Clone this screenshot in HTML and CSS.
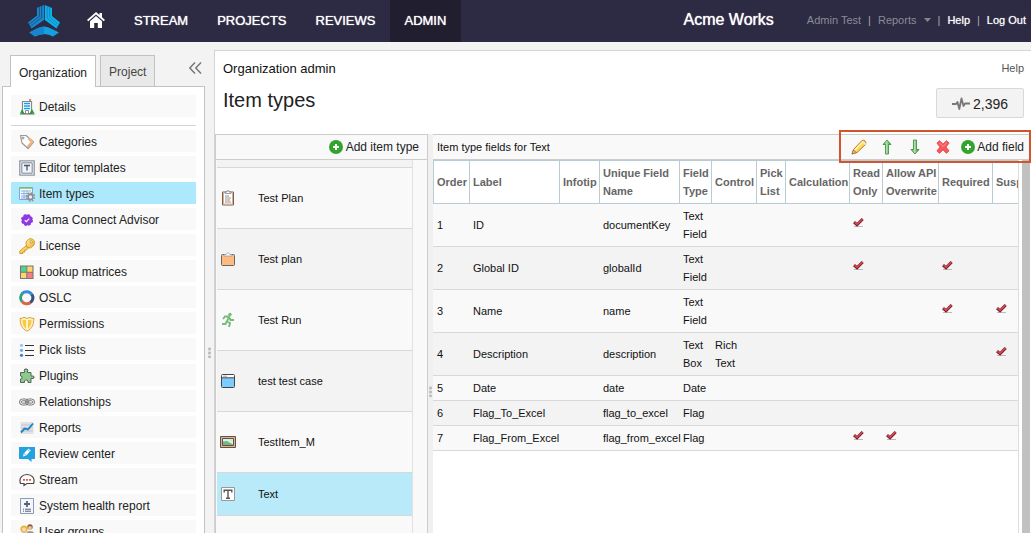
FILE: index.html
```html
<!DOCTYPE html>
<html lang="en">
<head>
<meta charset="utf-8">
<title>Item types</title>
<link rel="stylesheet" href="styles.css">
</head>
<body>
<svg class="defs" aria-hidden="true">
  <defs>
    <linearGradient id="gold" x1="0" y1="0" x2="1" y2="1"><stop offset="0" stop-color="#fff3a8"/><stop offset="1" stop-color="#efae28"/></linearGradient>
    <linearGradient id="green" x1="0" y1="0" x2="1" y2="0"><stop offset="0" stop-color="#3f9a45"/><stop offset=".45" stop-color="#b4e5a6"/><stop offset="1" stop-color="#2e8136"/></linearGradient>
    <symbol id="tick" viewBox="0 0 11 16">
      <path d="M1 9.500h9" stroke="#bbb" stroke-width="1"/>
      <path d="M1 5.200 4 7.700 9.700 2" fill="none" stroke="#7c1f2b" stroke-width="3"/>
      <path d="M1.500 5.200 4 7.200 9.500 1.900" fill="none" stroke="#dd4a4f" stroke-width="1.400"/>
    </symbol>
    <symbol id="plus" viewBox="0 0 14 14">
      <circle cx="7" cy="7" r="7" fill="#32a32c"/><path d="M7 4v6M4 7h6" stroke="#fff" stroke-width="2"/>
    </symbol>
  </defs>
</svg>

<div class="app">
  <header class="topbar">
    <a class="logo" href="#" aria-label="Jama home">
      <svg viewBox="0 0 32 32" width="32" height="32">
        <path d="M9 2.700 16 0v15L3.500 23.500 0 17.500l9-7z" fill="#1788cf"/>
        <path d="M11.400 1.500v10L1 19.300M13.700.500v12L2.200 21.500" fill="none" stroke="#2c2b43" stroke-width=".6"/>
        <path d="M16.800 0 24 3v8l8 6.500-3.500 6L16.800 15z" fill="#0cb1e8"/>
        <path d="M19.200.800V13l10.300 8.700M21.600 1.800v10.200l9.200 7.700" fill="none" stroke="#1579b7" stroke-width=".7"/>
        <path d="M1.300 27.500 8 24q8-5 16 0l7 3.500-6 4q-9-5-18 0z" fill="#139fe0"/>
        <path d="M1.300 27.500 8 24q4-2.500 8-2.500v7.700q-4.500 0-9 2.300z" fill="#1685cd"/>
      </svg>
    </a>
    <nav class="mainnav">
      <a class="home" href="#" aria-label="Home">
        <svg viewBox="0 0 18 16" width="18" height="16"><path d="M9 0 0 8l1.300 1.300L9 2.600l7.700 6.700L18 8l-3-2.700V1h-2.500v2z" fill="#fff"/><path d="M3 9.200 9 4l6 5.200V16h-4.200v-5H7.200v5H3z" fill="#fff"/></svg>
      </a>
      <a href="#">STREAM</a>
      <a href="#">PROJECTS</a>
      <a href="#">REVIEWS</a>
      <a href="#" class="current">ADMIN</a>
    </nav>
    <span class="org">Acme Works</span>
    <nav class="userlinks">
      <a href="#" class="dim">Admin Test</a><i>|</i>
      <a href="#" class="dim">Reports <svg viewBox="0 0 7 4" width="7" height="4"><path d="M0 0h7L3.500 4z" fill="#85848f"/></svg></a><i>|</i>
      <a href="#">Help</a><i>|</i>
      <a href="#">Log Out</a>
    </nav>
  </header>

  <div class="body">
    <aside class="sidebar">
      <div class="tabs">
        <button class="tab active" type="button">Organization</button>
        <button class="tab" type="button">Project</button>
        <button class="collapse" type="button" aria-label="Collapse sidebar">
          <svg viewBox="0 0 13 12" width="13" height="12"><path d="M6 .5.800 6 6 11.500M12 .5 6.800 6l5.200 5.500" fill="none" stroke="#777" stroke-width="1.500"/></svg>
        </button>
      </div>
      <nav class="menu">
        <a href="#"><svg viewBox="0 0 16 16"><path d="M11 0v2" stroke="#d22" stroke-width="1.200"/><path d="M3.500 2.500h9v12h-9z" fill="#fff" stroke="#888" stroke-width="1.200"/><path d="M5 4.500h6M5 7h6M5 9.500h6" stroke="#16a0ee" stroke-width="1.400"/><path d="M6.500 14.500v-3h3v3" fill="#fff" stroke="#888"/><path d="M1 14.500 3 10l2.500 4.500zM10.500 14.500 13 10l2.500 4.500z" fill="#1fa32f"/><path d="M1 15h14.500" stroke="#666" stroke-width="1"/></svg>Details</a>
        <hr>
        <a href="#"><svg viewBox="0 0 16 16"><path d="M1.500 1.500h5.500l7.500 6.500-5.500 6.500-6-5.500z" fill="#fff" stroke="#999" stroke-width="1.200" stroke-linejoin="round"/><path d="M9.500 4.500 13 8l-4.500 5" fill="none" stroke="#f6b27a" stroke-width="2.400"/><circle cx="4" cy="4" r="1" fill="#fff" stroke="#777" stroke-width=".8"/></svg>Categories</a>
        <a href="#"><svg viewBox="0 0 16 16"><path d="M.8.800h14.400v14.400H.8z" fill="#fff" stroke="#8f95a3" stroke-width="1.300"/><path d="M2.800 2.800h10.400v10.400H2.800z" fill="#eef4fb" stroke="#7d8697"/><path d="M5 5.500h6M8 5.500v5" stroke="#555" stroke-width="1.300"/></svg>Editor templates</a>
        <a href="#" class="current"><svg viewBox="0 0 16 16"><path d="M.5 1.500h13v12H.5z" fill="#f3f8ff" stroke="#7fa7dc"/><path d="M.5 2h13" stroke="#83bd58" stroke-width="1.500"/><path d="M2 5h10M2 7.500h10M2 10h7M2 12h6M5 4.500v8M8 4.500v8" stroke="#8bb2e5"/><circle cx="11.500" cy="11" r="4" fill="none" stroke="#979797" stroke-width="1.800" stroke-dasharray="1.700 1.400"/><circle cx="11.500" cy="11" r="2.400" fill="#eee" stroke="#8c8c8c" stroke-width="1.500"/></svg>Item types</a>
        <a href="#"><svg viewBox="0 0 16 16"><circle cx="8" cy="8" r="5.200" fill="#9138e3"/><circle cx="8" cy="8" r="5" fill="none" stroke="#9138e3" stroke-width="2" stroke-dasharray="2.600 1.320"/><path d="M5.800 8.200 7.400 9.700 10.300 6.600" fill="none" stroke="#fff" stroke-width="1.200"/></svg>Jama Connect Advisor</a>
        <a href="#"><svg viewBox="0 0 16 16"><path d="M8 7 .8 13v2.500h3V14h2v-2h1.700l2.500-2.500" fill="url(#gold)" stroke="#d39a2d"/><path d="M7 4 10 .8l3.500.2 2 2.500-.5 3.500-3.500 3-4-1z" fill="url(#gold)" stroke="#d39a2d"/><circle cx="12.200" cy="3.800" r="1.200" fill="#fff" stroke="#b57b16" stroke-width=".7"/></svg>License</a>
        <a href="#"><svg viewBox="0 0 16 16"><path d="M1.500 2h6v6h-6z" fill="#4bd391"/><path d="M8 2h6v6H8zM1.500 8h6v6h-6z" fill="#ffd56a"/><path d="M8 8h6v6H8z" fill="#fb7c80"/><path d="M1.500 2h12.500v12.500H1.500zM7.800 2v12.500M1.500 8.200H14" fill="none" stroke="#777" stroke-width="1.100"/></svg>Lookup matrices</a>
        <a href="#"><svg viewBox="0 0 16 16" fill="none" stroke-width="3"><path d="M3.200 3.600A6 6 0 0 1 13 5" stroke="#3989dc"/><path d="M13 4.500A6 6 0 0 1 11 12.800" stroke="#34507e"/><path d="M11.500 12.500A6 6 0 0 1 3 11.500" stroke="#d9654d"/><path d="M3 11.500A6 6 0 0 1 3.500 3.400" stroke="#2ca27c"/></svg>OSLC</a>
        <a href="#"><svg viewBox="0 0 16 16"><path d="M1.200 2 3 2.500 5 1.200 8 2.500l3-1.300 2 1.300 1.800-.5C15 8 13.500 12.500 8 15.200 2.500 12.500 1 8 1.200 2z" fill="#fff0b3" stroke="#dca536"/><path d="M3.500 4h3.800v9C4.500 11 3.500 8 3.500 4zM8.800 4h3.700c0 4-1 7-3.700 9z" fill="#f7ca48"/><path d="M8 3v11" stroke="#fff" stroke-width="1"/></svg>Permissions</a>
        <a href="#"><svg viewBox="0 0 16 16"><path d="M6 3.500h9M6 8.500h9M6 13.500h9" stroke="#333" stroke-width="1.200"/><circle cx="2.500" cy="3.300" r="1.600" fill="#9dc2f0"/><circle cx="2.500" cy="8.300" r="1.600" fill="#75a7e4"/><circle cx="2.500" cy="13.300" r="1.600" fill="#3d7fd4"/></svg>Pick lists</a>
        <a href="#"><svg viewBox="0 0 16 16"><path d="M1.500 4.500h4V3L5 2l1-1h2l1 1-.5 1v1.500h3.500V8h2l1 .500v1.500l-1 .5h-2v4H9v-1.500l-1-1H6.500l-1 1v1.500h-4V11l1.500-.5V8.500L1.500 8z" fill="#8bc98d" stroke="#59655a"/></svg>Plugins</a>
        <a href="#"><svg viewBox="0 0 16 16" fill="none" stroke="#777"><rect x=".5" y="5" width="9" height="6" rx="3"/><rect x="6.500" y="5" width="9" height="6" rx="3"/><rect x="2.300" y="6.800" width="5.500" height="2.300" rx="1"/><rect x="8.200" y="6.800" width="5.500" height="2.300" rx="1"/></svg>Relationships</a>
        <a href="#"><svg viewBox="0 0 16 16"><path d="M1.500 2h13v12h-13z" fill="#e2e2e2"/><path d="M2 5h12M2 8h12M2 11h12" stroke="#c5c5c5"/><path d="M2 12.500 5.500 8.500 9 9.500 14 3.500" fill="none" stroke="#1c82cb" stroke-width="1.900"/></svg>Reports</a>
        <a href="#"><svg viewBox="0 0 16 16"><path d="M0 1h16v12h-3.500v3L9 13H0z" fill="#23a2df"/><path d="m4 10.500.8-3 4.500-5 2.500 2-4.500 5z" fill="#fff"/><path d="m5 7.500 2.300 2M8.500 3.500l2.500 2" stroke="#23a2df" stroke-width=".7"/></svg>Review center</a>
        <a href="#"><svg viewBox="0 0 16 16"><path d="M5 11.500H1.500C-.5 6 3.500 2.500 8 2.500s8.500 3.500 6.500 9H8l-3 2z" fill="#fff" stroke="#484848" stroke-width="1.200"/><path d="M4 7.800h2M7 7.800h2M10 7.800h2" stroke="#e9583e" stroke-width="1.800"/></svg>Stream</a>
        <a href="#"><svg viewBox="0 0 16 16"><path d="M1.500.500h13v15h-13z" fill="#f3f6fa" stroke="#8c9bb7"/><path d="M8 3v6M5 6h6" stroke="#56617a" stroke-width="1.800"/><path d="M4 11.200h1M6 11.200h6M4 13.200h1M6 13.200h6" stroke="#56617a"/></svg>System health report</a>
        <a href="#"><svg viewBox="0 0 16 16"><circle cx="11" cy="3" r="2.700" fill="#8a5a33"/><circle cx="11" cy="4" r="1.900" fill="#f3c69a"/><path d="M7.500 15V9q0-2 3.500-2t4 2v6z" fill="#9d9c91"/><circle cx="5" cy="5" r="3.600" fill="#e9b33d"/><circle cx="5" cy="5.500" r="2" fill="#fbd9b1"/><path d="M.5 16v-5q0-2.500 4.500-2.500T10 11v5z" fill="#b886c7"/></svg>User groups</a>
      </nav>
    </aside>

    <div class="splitter"><span class="grip"></span></div>

    <main class="main">
      <div class="heading">
        <div class="crumbs"><span>Organization admin</span><a href="#">Help</a></div>
        <div class="titlerow">
          <h1>Item types</h1>
          <button class="activity" type="button"><svg viewBox="0 0 18 14" width="18" height="14"><path d="M0 7h4l1.500-2 1.800 7L9.500 1.500l2 7.500L13 6.500h5" fill="none" stroke="#777" stroke-width="1.800" stroke-linejoin="round"/></svg>2,396</button>
        </div>
      </div>

      <div class="panes">
        <section class="types">
          <div class="bar"><button class="add" type="button"><svg width="14" height="14"><use href="#plus"/></svg>Add item type</button></div>
          <ul class="typelist">
            <li class="partial"></li>
            <li><svg viewBox="0 0 16 16"><path d="M2.500 2h11v13h-11z" fill="#fff" stroke="#666"/><path d="M3.500 3v11h9V3" fill="none" stroke="#f3a775"/><path d="M5 3.500V2h2V.8h2V2h2v1.500z" fill="#fff" stroke="#888" stroke-width=".8"/><path d="M5 6h4M5 8h6M5 10h5M5 12h6" stroke="#888" stroke-width=".9"/></svg>Test Plan</li>
            <li><svg viewBox="0 0 16 16"><rect x="1.500" y="3.500" width="13" height="11" rx="1" fill="#ffba82" stroke="#666"/><path d="M4 5V3.500h2l2-2 2 2h2V5z" fill="#fff" stroke="#999" stroke-width=".8"/></svg>Test plan</li>
            <li><svg viewBox="0 0 16 16" fill="none" stroke="#78bb78" stroke-width="1.900"><circle cx="10" cy="2.500" r="1.300" fill="#78bb78" stroke-width="1"/><path d="M3 7l2-2.500h4L7 9.500l3 1.500-1 4M7 9l-1.500 3H2M9 5l1.500 3H14"/></svg>Test Run</li>
            <li><svg viewBox="0 0 16 16"><rect x="1.500" y="1.500" width="13" height="13" rx="1" fill="#fff" stroke="#444"/><path d="M2 5h12v9H2z" fill="#7dccff"/><path d="M2 4.800h12" stroke="#444"/><path d="M3.500 3.200h1M5.500 3.200h1" stroke="#444"/></svg>test test case</li>
            <li><svg viewBox="0 0 16 16"><path d="M.500 2.500h15v11H.500z" fill="#f2ac7d" stroke="#555"/><path d="M2.500 4.500h11v7h-11z" fill="#d4f1fb" stroke="#555"/><path d="M3 7.500 7 7l6 3.500v.500H3z" fill="#78b870"/><circle cx="11.500" cy="6" r="1.200" fill="#ffe168"/></svg>TestItem_M</li>
            <li class="selected"><svg viewBox="0 0 16 16"><path d="M1.500 1.500h13v13h-13z" fill="#fff" stroke="#999"/><path d="M4.200 6.500V4.300h7.600v2.200M8 4.500V12M6 12.200h4" fill="none" stroke="#555" stroke-width="1.400"/></svg>Text</li>
          </ul>
        </section>

        <div class="splitter inner"><span class="grip"></span></div>

        <section class="fields">
          <div class="bar">
            <h2>Item type fields for Text</h2>
            <div class="tools">
              <button type="button" aria-label="Edit"><svg viewBox="0 0 16 16"><path d="M1 15 2.500 10.500 10.500 2q2-1.500 3.500 0t.500 3.500L6 13.500z" fill="#ffd65c" stroke="#b87c22"/><path d="m4 11 8-8.500" stroke="#fff2b0" stroke-width="1.600"/><path d="m11.500 2.500 3 3" stroke="#fbe7c5" stroke-width="1.800"/><path d="m1 15 1.500-4 3 2.500z" fill="#e8c193" stroke="#8b5a22" stroke-width=".6"/></svg></button>
              <button type="button" aria-label="Move up"><svg viewBox="0 0 16 16"><path d="M8 1l4 4.500h-2.500V15h-3V5.500H4z" fill="url(#green)" stroke="#338a3b" stroke-width=".8"/></svg></button>
              <button type="button" aria-label="Move down"><svg viewBox="0 0 16 16"><path d="M8 15l4-4.500h-2.500V1h-3v9.500H4z" fill="url(#green)" stroke="#338a3b" stroke-width=".8"/></svg></button>
              <button type="button" aria-label="Delete"><svg viewBox="0 0 16 16"><path d="M2 4.200 4.500 1.800 8 5.200l3.500-3.400L14 4.200 10.800 8l3.200 3.800-2.500 2.400L8 10.800l-3.500 3.400L2 11.800 5.200 8z" fill="#f9575b" stroke="#e8434b" stroke-linejoin="round"/><path d="m4.500 4 3.500 3.500L11.500 4" fill="none" stroke="#ff9a98"/></svg></button>
              <button class="add" type="button"><svg width="14" height="14"><use href="#plus"/></svg>Add field</button>
            </div>
          </div>
          <div class="scroller">
            <div class="tablewrap">
              <table>
                <colgroup><col class="w37"><col class="w90"><col class="w40"><col class="w80"><col class="w32"><col class="w45"><col class="w29"><col class="w64"><col class="w33"><col class="w56"><col class="w54"><col class="w54"></colgroup>
                <thead><tr><th>Order</th><th>Label</th><th>Infotip</th><th>Unique Field Name</th><th>Field Type</th><th>Control</th><th>Pick List</th><th>Calculation</th><th>Read Only</th><th>Allow API Overwrite</th><th>Required</th><th>Suspect</th></tr></thead>
                <tbody>
                  <tr><td>1</td><td>ID</td><td></td><td>documentKey</td><td>Text Field</td><td></td><td></td><td></td><td><svg class="tick"><use href="#tick"/></svg></td><td></td><td></td><td></td></tr>
                  <tr><td>2</td><td>Global ID</td><td></td><td>globalId</td><td>Text Field</td><td></td><td></td><td></td><td><svg class="tick"><use href="#tick"/></svg></td><td></td><td><svg class="tick"><use href="#tick"/></svg></td><td></td></tr>
                  <tr><td>3</td><td>Name</td><td></td><td>name</td><td>Text Field</td><td></td><td></td><td></td><td></td><td></td><td><svg class="tick"><use href="#tick"/></svg></td><td><svg class="tick"><use href="#tick"/></svg></td></tr>
                  <tr><td>4</td><td>Description</td><td></td><td>description</td><td>Text Box</td><td>Rich Text</td><td></td><td></td><td></td><td></td><td></td><td><svg class="tick"><use href="#tick"/></svg></td></tr>
                  <tr><td>5</td><td>Date</td><td></td><td>date</td><td>Date</td><td></td><td></td><td></td><td></td><td></td><td></td><td></td></tr>
                  <tr><td>6</td><td>Flag_To_Excel</td><td></td><td>flag_to_excel</td><td>Flag</td><td></td><td></td><td></td><td></td><td></td><td></td><td></td></tr>
                  <tr><td>7</td><td>Flag_From_Excel</td><td></td><td>flag_from_excel</td><td>Flag</td><td></td><td></td><td></td><td><svg class="tick"><use href="#tick"/></svg></td><td><svg class="tick"><use href="#tick"/></svg></td><td></td><td></td></tr>
                </tbody>
              </table>
            </div>
            <div class="thumb"></div>
          </div>
        </section>
      </div>
    </main>
  </div>
</div>
</body>
</html>
```
FILE: styles.css
```css
* { box-sizing: border-box; }

html { height: 100%; overflow: hidden; }

body {
  margin: 0;
  height: 100%;
  overflow: hidden;
  background: #f3f3f3;
  color: #222;
  font: 12px "Liberation Sans", Arial, sans-serif;
}

a { color: inherit; text-decoration: none; }

button {
  padding: 0;
  border: 0;
  background: none;
  color: inherit;
  font: inherit;
}

h1, h2 { margin: 0; font-weight: normal; }

svg { display: block; flex: none; }

.defs { position: absolute; width: 0; height: 0; }

/* The page is taller than a small window and is clipped by it. */
.app {
  display: flex;
  flex-direction: column;
  min-height: max(100%, 662px);
}

/* Top bar */
.topbar {
  display: flex;
  align-items: center;
  height: 42px;
  padding: 0 5px 0 28px;
  background: #2c2b43;
  color: #fff;
}

.logo { margin-right: 13px; }

.mainnav { display: flex; height: 100%; font-size: 13px; text-shadow: 0 0 1px #fff; }

.mainnav a {
  display: flex;
  align-items: center;
  padding: 0 15px 2px 14px;
}

.mainnav .current { background: #201e2f; }

.org {
  margin-left: auto;
  margin-right: 33px;
  padding-bottom: 2px;
  font-size: 16px;
  text-shadow: 0 0 1px #fff;
}

.userlinks {
  display: flex;
  gap: 7px;
  padding-bottom: 2px;
  font-size: 11px;
  text-shadow: 0 0 1px #bbb;
}

.userlinks i { color: #aaa; font-style: normal; text-shadow: none; }
.userlinks .dim { color: #8b8a97; text-shadow: none; }
.userlinks svg { display: inline-block; margin: 0 0 2px 4px; }

/* Sidebar */
.body { display: flex; flex: 1; }

.sidebar {
  display: flex;
  flex-direction: column;
  width: 205px;
  padding: 13px 0 0 2px;
}

.tabs { display: flex; gap: 4px; padding: 0 3px 0 8px; }

.tab {
  height: 31px;
  padding: 2px 8px 0;
  border: 1px solid #c2c2c2;
  border-bottom: 0;
  background: #e9e9e9;
  color: #444;
}

.tab.active {
  height: 32px;
  margin-bottom: -1px;
  background: #fff;
  color: #222;
  z-index: 1;
}

.collapse { margin: 0 0 6px auto; }

.menu {
  display: flex;
  flex: 1;
  flex-direction: column;
  gap: 4px;
  padding: 8px;
  border: 1px solid #c2c2c2;
  background: #fff;
}

.menu a {
  display: flex;
  align-items: center;
  gap: 4px;
  height: 22px;
  padding: 1px 8px 0;
  background: #f9f9f9;
}

.menu a.current { background: #ade9fc; }
.menu svg { width: 16px; height: 16px; }

.menu hr {
  width: 100%;
  height: 1px;
  margin: 4px 0 0;
  border: 0;
  background: #d5d5d5;
}

/* Splitters */
.splitter {
  display: flex;
  align-items: center;
  justify-content: center;
  width: 9px;
}

.splitter.inner { width: 6px; background: #f0f0f0; border-left: 1px solid #ccc; }

.grip {
  width: 3px;
  height: 11px;
  background: radial-gradient(circle at 50% 50%, #bbb 1px, transparent 2px) 0 0 / 3px 4px;
}

/* Main area */
.main {
  display: flex;
  flex: 1;
  flex-direction: column;
  min-width: 0;
  margin: 8px 0 14px;
  border: solid #d4d4d4;
  border-width: 1px 0 0 1px;
  background: #fff;
}

.heading { padding: 8px 7px 16px 8px; }

.crumbs {
  display: flex;
  justify-content: space-between;
  align-items: center;
  height: 18px;
  color: #111;
  font-size: 13px;
}

.crumbs a { color: #555; font-size: 11px; }

.titlerow {
  display: flex;
  align-items: flex-end;
  justify-content: space-between;
  margin-top: 11px;
}

.titlerow h1 { align-self: flex-start; font-size: 20px; line-height: 24px; }

.activity {
  display: flex;
  align-items: center;
  justify-content: center;
  gap: 3px;
  width: 88px;
  height: 30px;
  padding-top: 1px;
  border: 1px solid #d8d8d8;
  border-radius: 2px;
  background: #f3f3f3;
  font-size: 14px;
}

.panes { display: flex; flex: 1; min-width: 0; }

.bar {
  display: flex;
  align-items: center;
  justify-content: space-between;
  height: 26px;
  border: solid #ccc;
  border-width: 1px 0;
  background: #f9f9f9;
}

.add { display: flex; align-items: center; gap: 3px; }

/* Item type list */
.types {
  display: flex;
  flex-direction: column;
  width: 212px;
  border-left: 1px solid #ccc;
  background: #f9f9f9;
}

.types .bar { justify-content: flex-end; padding-right: 8px; }

.typelist {
  flex: 1;
  margin: 0 14px 0 0;
  padding: 0 0 0 1px;
  border-right: 1px solid #e2e2e2;
  list-style: none;
  color: #111;
  font-size: 11px;
}

.typelist li {
  display: flex;
  align-items: center;
  gap: 22px;
  height: 61px;
  padding: 0 3px;
  border-bottom: 1px solid #d8d8d8;
}

.typelist li:nth-child(odd) { background: #f3f3f3; }
.typelist li:nth-child(even) { background: #f9f9f9; }
.typelist li.partial { height: 8px; }
.typelist li.selected { height: 43px; background: #b9eafa; }
.typelist svg { width: 16px; height: 16px; }

/* Fields table */
.fields { display: flex; flex: 1; flex-direction: column; min-width: 0; }

.fields .bar { position: relative; padding-left: 4px; }
.fields h2 { color: #111; font-size: 11px; }

/* The highlighted toolbar stands out over the bar's edges. */
.tools {
  position: absolute;
  top: -5px;
  right: 0;
  display: flex;
  align-items: center;
  gap: 12px;
  height: 33px;
  padding: 0 5px 0 10px;
  border: 2px solid #d3532b;
}

.tools button > svg[viewBox] { width: 16px; height: 16px; }
.tools .add { gap: 2px; margin-left: -2px; }

.scroller { display: flex; flex: 1; }

.tablewrap {
  flex: 1;
  min-width: 0;
  overflow: hidden;
  border-right: 1px solid #ddd;
}

table {
  width: 614px;
  table-layout: fixed;
  border-collapse: separate;
  border-spacing: 0;
  color: #111;
  font-size: 11px;
  line-height: 18px;
}

.w29 { width: 29px; }
.w32 { width: 32px; }
.w33 { width: 33px; }
.w37 { width: 37px; }
.w40 { width: 40px; }
.w45 { width: 45px; }
.w54 { width: 54px; }
.w56 { width: 56px; }
.w64 { width: 64px; }
.w80 { width: 80px; }
.w90 { width: 90px; }

th, td { padding: 3px 0 3px 3px; text-align: left; vertical-align: middle; }

th {
  border: 1px solid #b8ccd6;
  border-left: 0;
  background: #fff;
  color: #666;
}

th:first-child { border-left: 1px solid #b8ccd6; }

td { border-bottom: 1px solid #d8d8d8; background: #f9f9f9; }
td:first-child { padding-left: 4px; }
tbody tr:nth-child(even) td { background: #f3f3f3; }

.tick { width: 11px; height: 16px; }

.thumb { width: 8px; margin: 0 1px 0 3px; background: #c1c1c1; }
```
